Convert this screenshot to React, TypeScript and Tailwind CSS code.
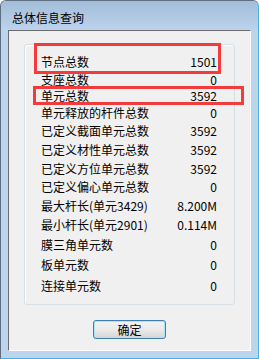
import React from 'react';

interface InfoRow {
  label: string;
  value: string;
  h: string;
}

const rows: InfoRow[] = [
  { label: '节点总数', value: '1501', h: 'h-[18px]' },
  { label: '支座总数', value: '0', h: 'h-[17px]' },
  { label: '单元总数', value: '3592', h: 'h-[16px]' },
  { label: '单元释放的杆件总数', value: '0', h: 'h-[17px]' },
  { label: '已定义截面单元总数', value: '3592', h: 'h-[19px]' },
  { label: '已定义材性单元总数', value: '3592', h: 'h-[19px]' },
  { label: '已定义方位单元总数', value: '3592', h: 'h-[19px]' },
  { label: '已定义偏心单元总数', value: '0', h: 'h-[18px]' },
  { label: '最大杆长(单元3429)', value: '8.200M', h: 'h-[19px]' },
  { label: '最小杆长(单元2901)', value: '0.114M', h: 'h-[20px]' },
  { label: '膜三角单元数', value: '0', h: 'h-[20px]' },
  { label: '板单元数', value: '0', h: 'h-[20px]' },
  { label: '连接单元数', value: '0', h: 'h-[21px]' },
];

const App: React.FC = () => {
  return (
    <div
      className="relative w-[259px] h-[359px] flex flex-col bg-[#bdd4ed] rounded-t-[6px] border border-t-[#5d6f80] border-l-[#5d6f80] border-r-[#3eb4e3] border-b-[#3eb4e3] overflow-hidden"
      style={{ fontFamily: '"Noto Sans CJK SC", "Liberation Sans", sans-serif' }}
    >
      {/* 标题栏 */}
      <div className="h-[29px] shrink-0 flex items-center pl-[11px] pt-[4px] bg-gradient-to-b from-[#a2bcd9] to-[#bcd3ec] text-[12px] text-black">
        总体信息查询
      </div>

      {/* 客户区 */}
      <div className="mx-[7px] mb-[7px] flex-1 flex flex-col items-center bg-[#f0f0f0] border border-t-[#6b6b6b] border-l-[#6b6b6b] border-r-white border-b-white">
        <div className="mt-[13px] w-[211px] h-[261px] rounded-[3px] border border-[#d5dfe5] shadow-[inset_1px_1px_0_#ffffff] pt-[8px] pl-[16px] pr-[17px]">
          {rows.map((r) => (
            <div key={r.label} className={`${r.h} flex items-center justify-between text-[12px] leading-none text-black`}>
              <span>{r.label}</span>
              <span>{r.value}</span>
            </div>
          ))}
        </div>

        <button className="mt-[15px] w-[73px] h-[19px] rounded-[3px] border border-[#3c7fb1] shadow-[inset_0_0_0_1px_#a9e4f7] bg-gradient-to-b from-[#f2f2f2] via-[#ebebeb] to-[#d6d6d6] text-[12px] leading-none text-black flex items-center justify-center">
          确定
        </button>
      </div>

      {/* 红色标注框 */}
      <div className="absolute left-[33px] top-[42px] w-[187px] h-[31px] border-[3px] border-[#f23c3c]" />
      <div className="absolute left-[32px] top-[85px] w-[211px] h-[19px] border-[3px] border-[#f23c3c]" />
    </div>
  );
};

export default App;
